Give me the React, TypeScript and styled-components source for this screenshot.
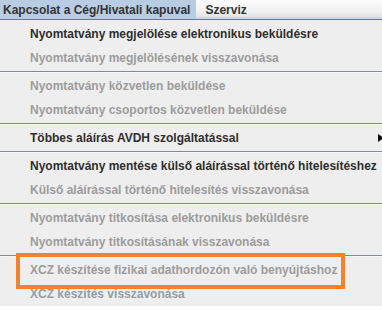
import React from 'react';
import styled, { createGlobalStyle } from 'styled-components';

const GlobalStyle = createGlobalStyle`
  html, body {
    margin: 0;
    padding: 0;
    background: #fff;
  }
  body {
    font-family: "Liberation Sans", Arial, sans-serif;
  }
`;

export const Frame = styled.div`
  width: 382px;
  overflow: hidden;
`;

export const MenuBar = styled.div`
  display: flex;
  height: 17px;
  background: linear-gradient(to bottom, #fcfcfc 0%, #f2f2f2 60%, #e4e4e4 100%);
  border-bottom: 2px solid #cdd5ea;
  box-shadow: 0 1px 0 #6d7899;
  margin-bottom: 1px;
`;

export const MenuTab = styled.div<{ $active?: boolean }>`
  display: flex;
  align-items: center;
  height: 19px;
  margin-bottom: -2px;
  padding: 0 ${p => (p.$active ? '6px' : '8px')} 0 ${p => (p.$active ? '3px' : '9px')};
  background: ${p => (p.$active ? '#b8cde4' : 'transparent')};
  color: #333;
  font-size: 12px;
  font-weight: 700;
  white-space: nowrap;
`;

export const Popup = styled.div`
  background: #eeeeee;
  padding-top: 2px;
`;

export const Item = styled.div<{ $disabled?: boolean }>`
  position: relative;
  display: flex;
  align-items: center;
  justify-content: space-between;
  height: 24px;
  padding-left: 30px;
  color: ${p => (p.$disabled ? '#9c9c9c' : '#2e2e2e')};
  font-size: 12px;
  font-weight: 700;
  white-space: nowrap;
`;

export const Separator = styled.div`
  height: 4px;
  display: flex;
  flex-direction: column;
  justify-content: center;

  &::before {
    content: '';
    display: block;
    height: 1px;
    background: #7d88a8;
  }
  &::after {
    content: '';
    display: block;
    height: 1px;
    background: #f7f7f9;
  }
`;

export const SubArrow = styled.span`
  width: 0;
  height: 0;
  border-top: 4px solid transparent;
  border-bottom: 4px solid transparent;
  border-left: 6px solid #111;
  margin-right: -2px;
`;

export const Highlight = styled.div`
  position: absolute;
  top: -5px;
  bottom: -7px;
  left: 16px;
  width: 329px;
  border: 4px solid #f5822b;
  box-sizing: border-box;
  pointer-events: none;
`;

type Entry =
  | { kind: 'item'; label: string; disabled?: boolean; submenu?: boolean; marked?: boolean }
  | { kind: 'sep' };

const entries: Entry[] = [
  { kind: 'item', label: 'Nyomtatvány megjelölése elektronikus beküldésre' },
  { kind: 'item', label: 'Nyomtatvány megjelölésének visszavonása', disabled: true },
  { kind: 'sep' },
  { kind: 'item', label: 'Nyomtatvány közvetlen beküldése', disabled: true },
  { kind: 'item', label: 'Nyomtatvány csoportos közvetlen beküldése', disabled: true },
  { kind: 'sep' },
  { kind: 'item', label: 'Többes aláírás AVDH szolgáltatással', submenu: true },
  { kind: 'sep' },
  { kind: 'item', label: 'Nyomtatvány mentése külső aláírással történő hitelesítéshez' },
  { kind: 'item', label: 'Külső aláírással történő hitelesítés visszavonása', disabled: true },
  { kind: 'sep' },
  { kind: 'item', label: 'Nyomtatvány titkosítása elektronikus beküldésre', disabled: true },
  { kind: 'item', label: 'Nyomtatvány titkosításának visszavonása', disabled: true },
  { kind: 'sep' },
  { kind: 'item', label: 'XCZ készítése fizikai adathordozón való benyújtáshoz', disabled: true, marked: true },
  { kind: 'item', label: 'XCZ készítés visszavonása', disabled: true },
];

export default function App() {
  return (
    <Frame>
      <GlobalStyle />
      <MenuBar>
        <MenuTab $active>Kapcsolat a Cég/Hivatali kapuval</MenuTab>
        <MenuTab>Szerviz</MenuTab>
      </MenuBar>
      <Popup>
        {entries.map((e, i) =>
          e.kind === 'sep' ? (
            <Separator key={i} />
          ) : (
            <Item key={i} $disabled={e.disabled}>
              <span>{e.label}</span>
              {e.submenu && <SubArrow />}
              {e.marked && <Highlight />}
            </Item>
          )
        )}
      </Popup>
    </Frame>
  );
}
